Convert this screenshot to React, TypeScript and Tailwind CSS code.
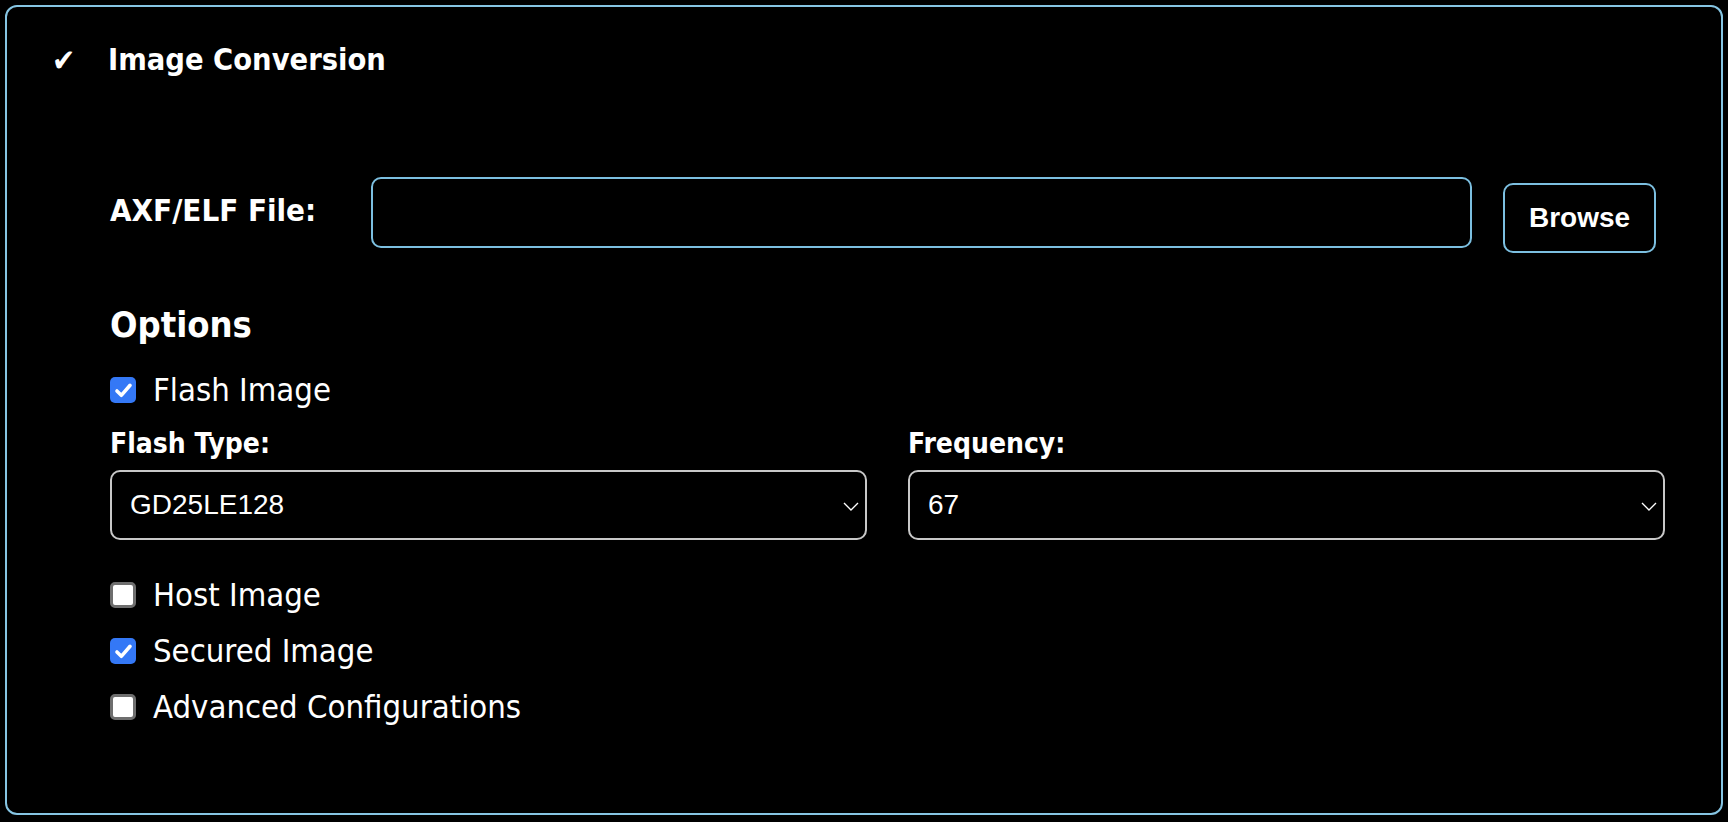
import { useState } from "react";

const tahoma = "font-['DejaVu_Sans_Condensed','DejaVu_Sans',sans-serif]";
const arial = "font-['Liberation_Sans',Arial,sans-serif]";

function Checkbox({ label, checked, onToggle }: { label: string; checked: boolean; onToggle: () => void }) {
  return (
    <label className="flex h-[38px] cursor-pointer items-center" onClick={onToggle}>
      {checked ? (
        <span className="flex h-[26px] w-[26px] items-center justify-center rounded-[5px] bg-[#3478f6]">
          <svg viewBox="0 0 24 24" className="h-[21px] w-[21px]" fill="none" stroke="white" strokeWidth="4" strokeLinecap="round" strokeLinejoin="round">
            <path d="M4.5 12.5l5 5L19.5 6" />
          </svg>
        </span>
      ) : (
        <span className="h-[26px] w-[26px] rounded-[5px] border-[3px] border-[#6e6e6e] bg-white" />
      )}
      <span className={`ml-[17px] text-[32.6px] leading-[38px] text-white ${tahoma}`}>{label}</span>
    </label>
  );
}

function Select({ value, options }: { value: string; options: string[] }) {
  return (
    <div className="relative h-[70px] rounded-[10px] border-2 border-[#c8c8c8]">
      <select
        defaultValue={value}
        className={`h-full w-full appearance-none bg-transparent pl-[18px] text-[28px] text-white outline-none ${arial}`}
      >
        {options.map((o) => (
          <option key={o} value={o} className="bg-black">{o}</option>
        ))}
      </select>
      <svg viewBox="0 0 16 9" className="pointer-events-none absolute right-[6px] top-[30px] h-[9px] w-[16px]" fill="none" stroke="white" strokeWidth="1.4">
        <path d="M1 1l7 7 7-7" />
      </svg>
    </div>
  );
}

export default function App() {
  const [opts, setOpts] = useState({ flash: true, host: false, secured: true, advanced: false });
  const toggle = (k: keyof typeof opts) => setOpts((o) => ({ ...o, [k]: !o[k] }));

  return (
    <div className="h-[822px] bg-black p-[5px]">
      <div className="h-[810px] rounded-[12px] border-2 border-[#86c5e3] pt-[36px]">
        <div className="flex h-[34px] items-center pl-[45px]">
          <span className={`w-[56px] text-[31px] leading-[34px] text-white ${tahoma}`}>✔</span>
          <span className={`text-[30.5px] font-bold leading-[34px] text-white ${tahoma}`}>Image Conversion</span>
        </div>

        <div className="ml-[103px] mr-[56px]">
          <div className="mt-[100px] flex items-start">
            <label className={`mt-[16px] w-[261px] shrink-0 text-[31px] font-bold leading-[34px] text-white ${tahoma}`}>
              AXF/ELF File:
            </label>
            <input className="h-[71px] flex-1 rounded-[10px] border-2 border-[#7cbfe0] bg-black px-4 text-[28px] text-white outline-none" />
            <button className={`ml-[31px] mr-[9px] mt-[6px] h-[70px] w-[153px] shrink-0 rounded-[10px] border-2 border-[#7cbfe0] bg-black text-[28px] font-bold text-white ${arial}`}>
              Browse
            </button>
          </div>

          <h3 className={`mt-[50px] text-[36px] font-bold leading-[44px] text-white ${tahoma}`}>Options</h3>

          <div className="mt-[24px]">
            <Checkbox label="Flash Image" checked={opts.flash} onToggle={() => toggle("flash")} />
          </div>

          <div className="mt-[18px] grid grid-cols-2 gap-x-[41px]">
            <div>
              <div className={`text-[28px] font-bold leading-[34px] text-white ${tahoma}`}>Flash Type:</div>
              <div className="mt-[9px]">
                <Select value="GD25LE128" options={["GD25LE128", "W25Q128", "MX25L128"]} />
              </div>
            </div>
            <div>
              <div className={`text-[28px] font-bold leading-[34px] text-white ${tahoma}`}>Frequency:</div>
              <div className="mt-[9px]">
                <Select value="67" options={["67", "100", "133"]} />
              </div>
            </div>
          </div>

          <div className="mt-[36px] flex flex-col gap-[18px]">
            <Checkbox label="Host Image" checked={opts.host} onToggle={() => toggle("host")} />
            <Checkbox label="Secured Image" checked={opts.secured} onToggle={() => toggle("secured")} />
            <Checkbox label="Advanced Configurations" checked={opts.advanced} onToggle={() => toggle("advanced")} />
          </div>
        </div>
      </div>
    </div>
  );
}
